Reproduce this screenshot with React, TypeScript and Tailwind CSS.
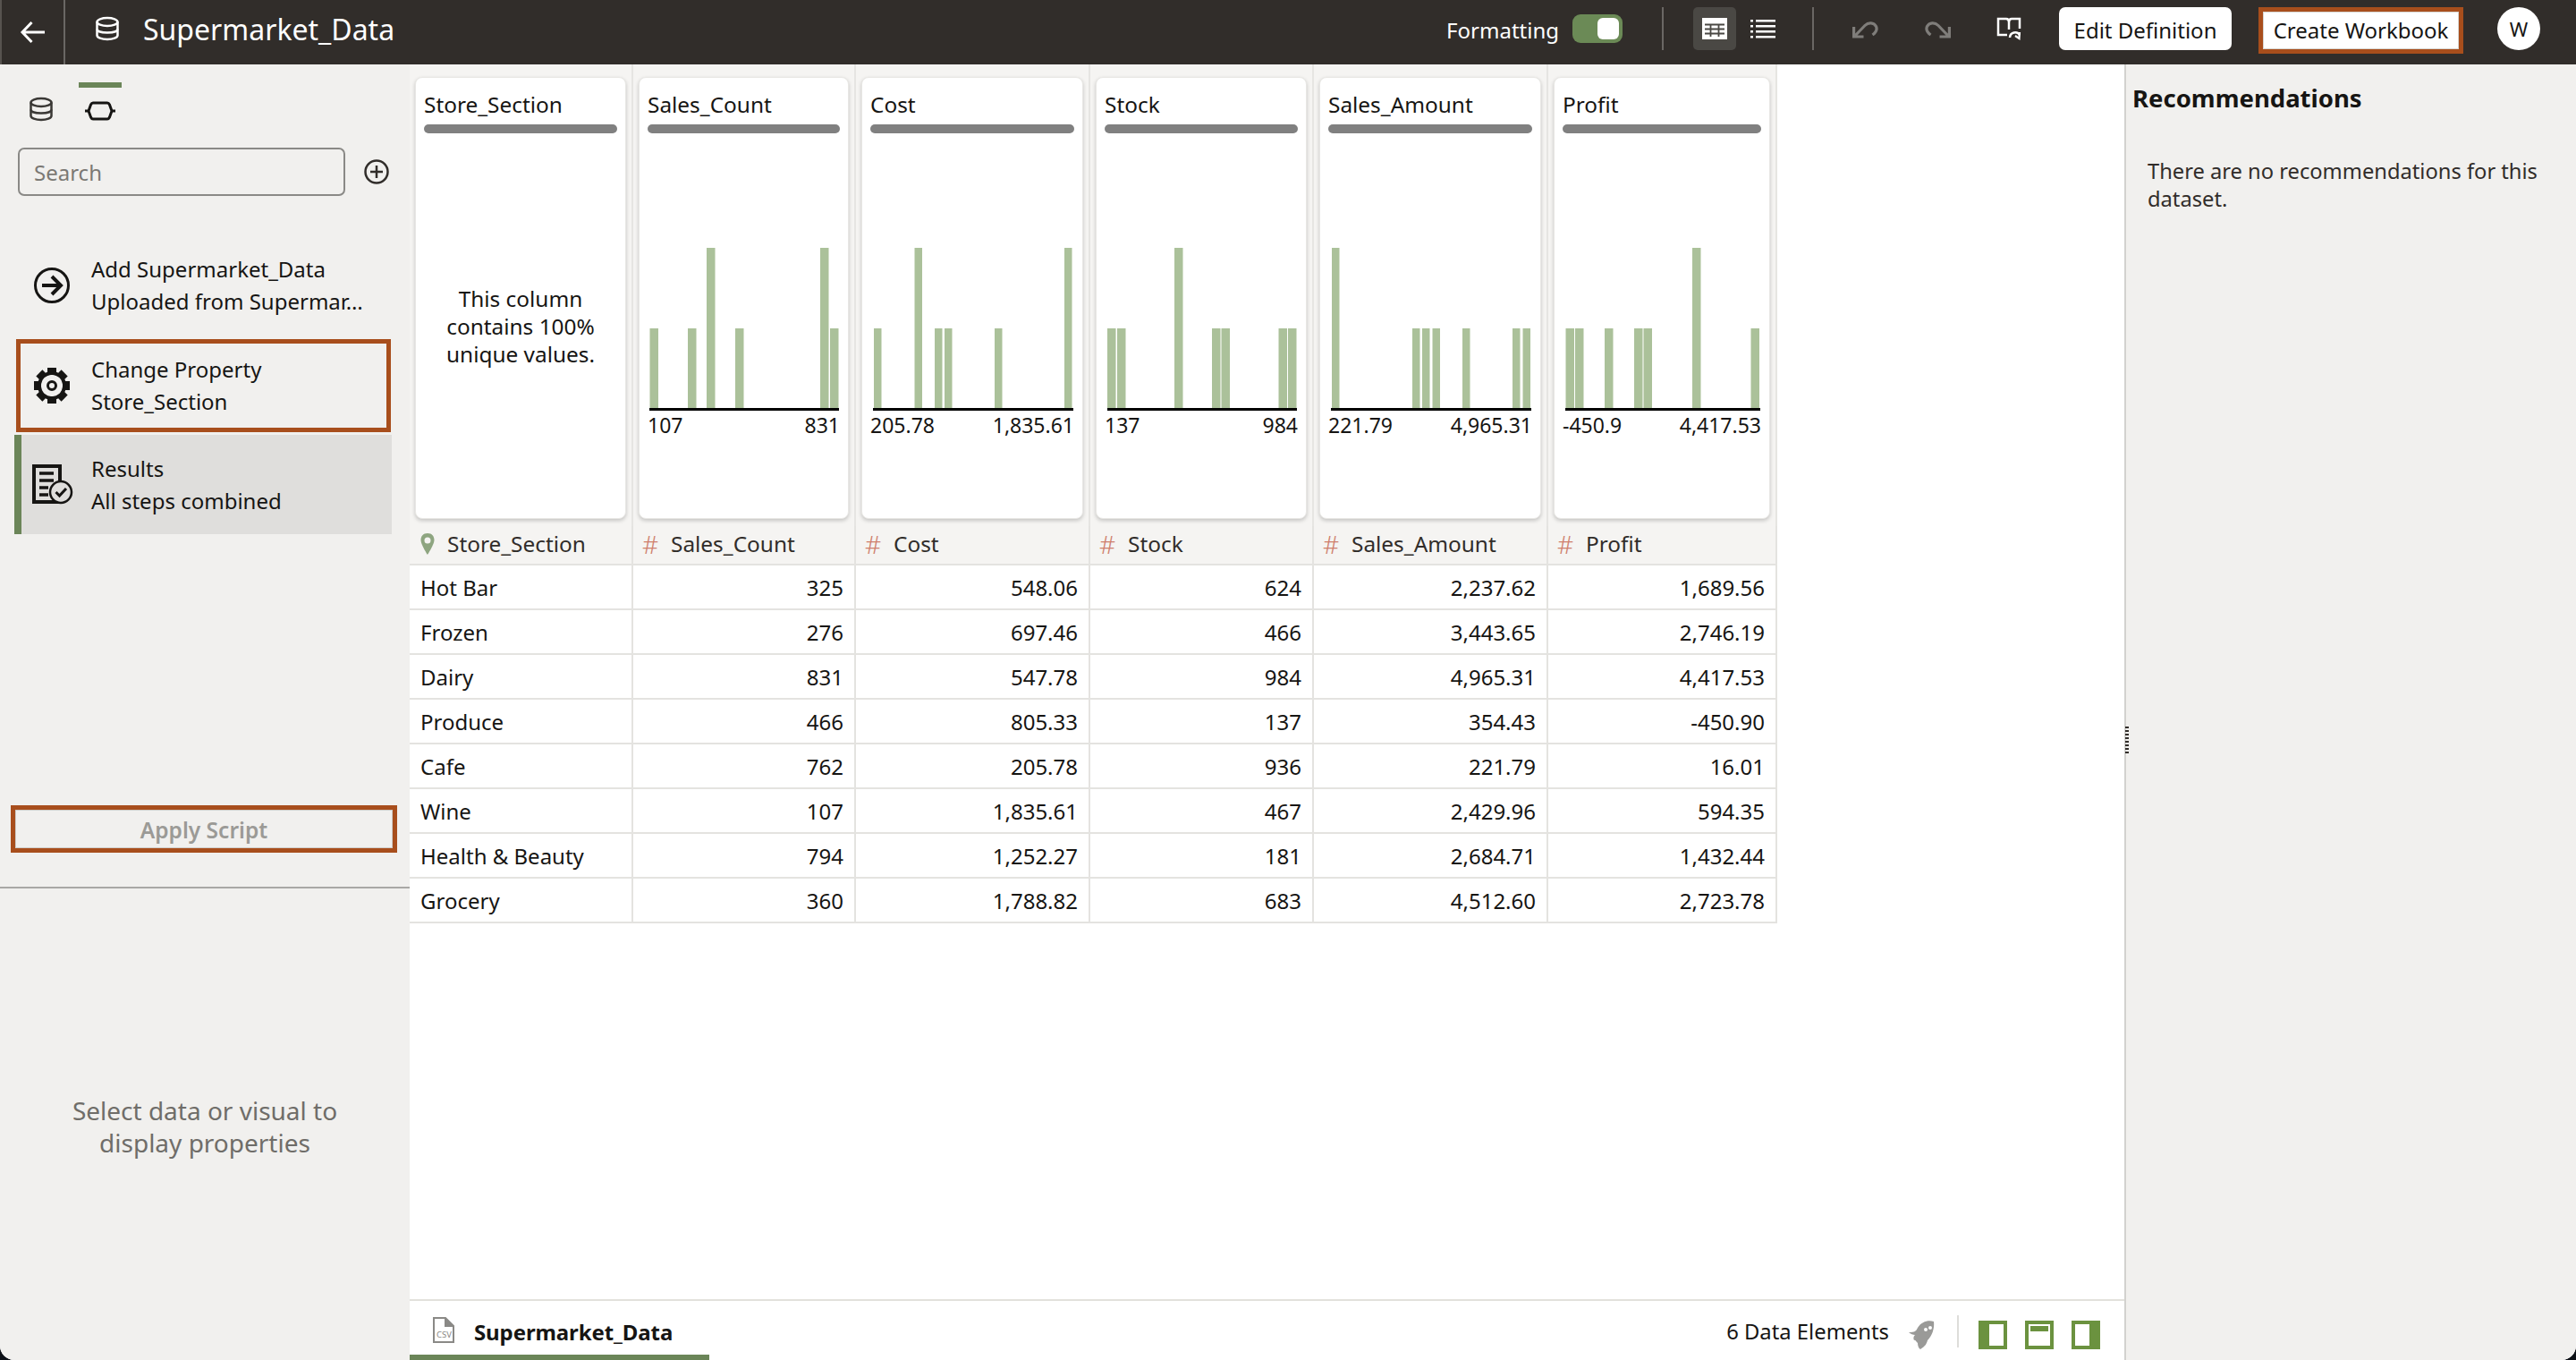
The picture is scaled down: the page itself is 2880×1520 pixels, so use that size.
import React from "react";

const FONT = { fontFamily: '"Noto Sans", "Liberation Sans", sans-serif' };

type Col = {
  name: string;
  width: number;
  left: number;
  lo?: string;
  hi?: string;
  axis?: [number, number];
  bars?: [number, number, boolean][];
  values: string[];
};

const sections = ["Hot Bar", "Frozen", "Dairy", "Produce", "Cafe", "Wine", "Health & Beauty", "Grocery"];

const cols: Col[] = [
  { name: "Store_Section", width: 250, left: 474, values: sections },
  {
    name: "Sales_Count", width: 249, left: 724, lo: "107", hi: "831", axis: [726, 938],
    bars: [[726.5, 9.5, false], [769, 9.5, false], [790, 9.5, true], [822, 9.5, false], [917, 9.5, true], [928, 9.5, false]],
    values: ["325", "276", "831", "466", "762", "107", "794", "360"],
  },
  {
    name: "Cost", width: 262, left: 973, lo: "205.78", hi: "1,835.61", axis: [976, 1200],
    bars: [[977, 8.5, false], [1022.5, 8.5, true], [1045, 8.5, false], [1056, 8.5, false], [1112, 8.5, false], [1190, 8.5, true]],
    values: ["548.06", "697.46", "547.78", "805.33", "205.78", "1,835.61", "1,252.27", "1,788.82"],
  },
  {
    name: "Stock", width: 250, left: 1235, lo: "137", hi: "984", axis: [1238, 1450],
    bars: [[1238, 9.5, false], [1249, 9.5, false], [1313, 9.5, true], [1355, 9.5, false], [1365.5, 9.5, false], [1429.5, 9.5, false], [1440, 9.5, false]],
    values: ["624", "466", "984", "137", "936", "467", "181", "683"],
  },
  {
    name: "Sales_Amount", width: 262, left: 1485, lo: "221.79", hi: "4,965.31", axis: [1488, 1712],
    bars: [[1489, 8.5, true], [1579, 8.5, false], [1590, 8.5, false], [1601.5, 8.5, false], [1635, 8.5, false], [1691, 8.5, false], [1702.5, 8.5, false]],
    values: ["2,237.62", "3,443.65", "4,965.31", "354.43", "221.79", "2,429.96", "2,684.71", "4,512.60"],
  },
  {
    name: "Profit", width: 256, left: 1747, lo: "-450.9", hi: "4,417.53", axis: [1750, 1968],
    bars: [[1750.5, 9.5, false], [1761, 9.5, false], [1794, 9.5, false], [1827, 9.5, false], [1837.5, 9.5, false], [1892, 9.5, true], [1957.5, 9.5, false]],
    values: ["1,689.56", "2,746.19", "4,417.53", "-450.90", "16.01", "594.35", "1,432.44", "2,723.78"],
  },
];

function DbIcon({ color }: { color: string }) {
  return (
    <svg width="28" height="28" viewBox="0 0 28 28" fill="none" stroke={color} strokeWidth="2.500">
      <ellipse cx="14" cy="6.500" rx="11.500" ry="4.500" />
      <path d="M2.500 6.500V21.500C2.500 24 7.500 26 14 26S25.500 24 25.500 21.500V6.500" />
      <path d="M2.500 14.500C2.500 17 7.500 18.500 14 18.500S25.500 17 25.500 14.500" />
    </svg>
  );
}

function Gear() {
  const bg = "#f1f0ee";
  return (
    <svg width="42" height="42" viewBox="0 0 42 42">
      {[0, 45, 90, 135, 180, 225, 270, 315].map((a) => (
        <rect key={a} x="16" y="1" width="10" height="9" fill="#161513" transform={`rotate(${a} 21 21)`} />
      ))}
      {[0, 45, 90, 135, 180, 225, 270, 315].map((a) => (
        <rect key={a} x="19.500" y="6" width="3" height="5" fill={bg} transform={`rotate(${a} 21 21)`} />
      ))}
      <circle cx="21" cy="21" r="14" fill="none" stroke="#161513" strokeWidth="4" />
      <circle cx="21" cy="21" r="12" fill={bg} />
      <circle cx="21" cy="21" r="4.500" fill="none" stroke="#161513" strokeWidth="3" />
    </svg>
  );
}

function ResultsIcon() {
  return (
    <svg width="46" height="46" viewBox="0 0 46 46" fill="none">
      <rect x="2" y="2" width="29" height="40" stroke="#161513" strokeWidth="4" fill="#dfdedc" />
      <path d="M8 10H24M8 18H24M8 26H18M8 34H18" stroke="#161513" strokeWidth="3.500" />
      <circle cx="32" cy="31" r="12" fill="#dfdedc" stroke="#161513" strokeWidth="2.500" />
      <path d="M26.500 31L30.500 35L38 27" stroke="#161513" strokeWidth="3" />
    </svg>
  );
}

function Chart({ col }: { col: Col }) {
  const [a, b] = col.axis!;
  return (
    <svg width={b - col.left + 4} height="182" className="mt-[128px] block">
      {col.bars!.map(([x, w, tall], i) => (
        <rect key={i} x={x - col.left} y={tall ? 0 : 90} width={w} height={tall ? 180 : 90} fill="#abc19a" />
      ))}
      <rect x={a - col.left} y="179" width={b - a} height="3" fill="#000" />
    </svg>
  );
}

function Column({ col, first }: { col: Col; first: boolean }) {
  return (
    <div className="flex flex-col shrink-0" style={{ width: col.width }}>
      <div className="h-[516px] bg-[#f5f4f2] border-r-2 border-[#e6e5e2] px-[6px] pt-[14px]">
        <div className="h-[494px] bg-white rounded-[8px] border border-[#e8e7e4] shadow-[0_2px_4px_rgba(0,0,0,0.2)] px-[9px] pt-[15px] text-[#161513]">
          <div className="h-[30px] leading-[30px] text-[24.4px] whitespace-nowrap">{col.name}</div>
          <div className="h-[10px] mt-[7px] rounded-full bg-[#808080]" />
          {col.axis ? (
            <>
              <Chart col={col} />
              <div className="flex justify-between mt-[3px] text-[23px] leading-[26px]">
                <span>{col.lo}</span>
                <span>{col.hi}</span>
              </div>
            </>
          ) : (
            <div className="mt-[169px] text-center text-[24.4px] leading-[31px]">
              This column
              <br />
              contains 100%
              <br />
              unique values.
            </div>
          )}
        </div>
      </div>
      <div className="h-[44px] flex items-center pb-[2px] bg-[#f5f4f2] border-b-2 border-r-2 border-[#e4e3e0] relative text-[#312d2a] text-[24.4px]">
        <span className="w-[42px] pl-[10px] flex items-center shrink-0">
          {first ? (
            <svg width="18" height="26" viewBox="0 0 18 26" className="ml-[1px]">
              <path
                fillRule="evenodd"
                d="M9 1C4 1 1.500 4.500 1.500 8.500C1.500 13.500 9 25 9 25S16.500 13.500 16.500 8.500C16.500 4.500 14 1 9 1ZM9 5.500A3.500 3.500 0 1 1 9 12.500A3.500 3.500 0 0 1 9 5.500Z"
                fill="#8ea580"
              />
            </svg>
          ) : (
            <span className="text-[#cf7f6d] text-[28px] font-light leading-none">#</span>
          )}
        </span>
        <span className="whitespace-nowrap">{col.name}</span>
      </div>
      {col.values.map((v, i) => (
        <div
          key={i}
          className={`h-[50px] flex items-center border-b-2 border-r-2 border-[#e4e3e0] bg-white text-[24px] pt-[2px] text-[#161513] ${
            first ? "pl-[12px]" : "justify-end pr-[12px]"
          }`}
        >
          {v}
        </div>
      ))}
    </div>
  );
}

function Step({
  icon,
  a,
  b,
  className,
}: {
  icon: React.ReactNode;
  a: string;
  b: string;
  className: string;
}) {
  return (
    <div className={`flex items-center ${className}`}>
      {icon}
      <div className="min-w-0 text-[24px] leading-[36px] text-[#161513]">
        <div className="whitespace-nowrap">{a}</div>
        <div className="whitespace-nowrap">{b}</div>
      </div>
    </div>
  );
}

export default function App() {
  return (
    <div className="w-[2880px] h-[1520px] bg-[#0d1117] overflow-hidden" style={FONT}>
      <div className="w-full h-full flex flex-col rounded-b-[16px] overflow-hidden bg-white">
        {/* top bar */}
        <div className="h-[72px] shrink-0 bg-[#312d2a] border-l-2 border-[#57534f] flex items-start text-white">
          <div className="w-[71px] h-[72px] border-r-2 border-[#6a6764] flex items-center justify-center shrink-0">
            <svg width="30" height="26" viewBox="0 0 30 26" fill="none" stroke="#fff" strokeWidth="3">
              <path d="M28 13H3M13.500 2L3 13L13.500 24" />
            </svg>
          </div>
          <div className="ml-[33px] mt-[18px]">
            <DbIcon color="#ffffff" />
          </div>
          <div className="ml-[26px] h-[66px] flex items-center text-[32px]">Supermarket_Data</div>

          <div className="ml-auto flex items-start pt-[8px] pr-[40px]">
            <div className="h-[52px] flex items-center text-[24px]">Formatting</div>
            <div className="ml-[15px] mt-[8px] w-[56px] h-[32px] rounded-[9px] bg-[#6b8a56] flex justify-end items-center pr-[4px]">
              <div className="w-[24px] h-[24px] rounded-[6px] bg-white" />
            </div>
            <div className="ml-[44px] w-[2px] h-[48px] bg-[#6a6764]" />
            <div className="ml-[33px] w-[48px] h-[48px] rounded-[5px] bg-[#4a4844] flex items-center justify-center">
              <svg width="28" height="24" viewBox="0 0 28 24">
                <rect width="28" height="24" fill="#fff" />
                <path d="M3 7.500H25M3 12.500H25M3 17.500H25M9.500 7.500V21M18.500 7.500V21" stroke="#4a4844" strokeWidth="1.800" />
              </svg>
            </div>
            <div className="ml-[16px] h-[48px] flex items-center">
              <svg width="28" height="22" viewBox="0 0 28 22" fill="#fff">
                <rect x="0" y="1" width="3" height="2.500" />
                <rect x="0" y="7" width="3" height="2.500" />
                <rect x="0" y="13" width="3" height="2.500" />
                <rect x="0" y="19" width="3" height="2.500" />
                <rect x="6" y="1" width="22" height="2.500" />
                <rect x="6" y="7" width="22" height="2.500" />
                <rect x="6" y="13" width="22" height="2.500" />
                <rect x="6" y="19" width="22" height="2.500" />
              </svg>
            </div>
            <div className="ml-[41px] w-[2px] h-[48px] bg-[#6a6764]" />
            <div className="ml-[43px] h-[48px] flex items-center">
              <svg width="29" height="22" viewBox="0 0 29 22" fill="none" stroke="#7f7d7a" strokeWidth="3.200">
                <path d="M1.600 9V20H12.500M2 20L14 7.500C18 3.500 24 4 26.500 8.500C28 12 26 15.500 22.500 18" />
              </svg>
            </div>
            <div className="ml-[52px] h-[48px] flex items-center">
              <svg width="29" height="22" viewBox="0 0 29 22" fill="none" stroke="#7f7d7a" strokeWidth="3.200">
                <path d="M27.400 9V20H16.500M27 20L15 7.500C11 3.500 5 4 2.500 8.500C1 12 3 15.500 6.500 18" />
              </svg>
            </div>
            <div className="ml-[51px] mt-[10px]">
              <svg width="30" height="30" viewBox="0 0 30 30" fill="none" stroke="#fff" strokeWidth="2.500">
                <path d="M12 21H2V3H11C13 3 14 5 14 7V15M14 7C14 5 15 3 17 3H26V14" />
                <path d="M15 24A6 6 0 0 1 26 21" />
                <path d="M26 18L25.500 25L21 22" strokeWidth="2.200" />
              </svg>
            </div>
            <div className="ml-[40px] w-[193px] h-[48px] bg-white rounded-[7px] text-[#161513] flex items-center justify-center text-[24px] pt-[3px]">
              Edit Definition
            </div>
            <div className="ml-[30px] w-[229px] h-[52px] border-[5px] border-[#a84e1c] bg-white text-[#161513] flex items-center justify-center text-[24px] outline outline-1 -outline-offset-[6px] outline-[#d8d6d2]">
              Create Workbook
            </div>
            <div className="ml-[38px] w-[48px] h-[48px] rounded-full bg-white text-[#161513] flex items-center justify-center text-[22px]">
              W
            </div>
          </div>
        </div>

        <div className="flex-1 flex min-h-0">
          {/* left panel */}
          <div className="w-[458px] shrink-0 bg-[#f1f0ee] flex flex-col">
            <div className="h-[921px] shrink-0 border-b-2 border-[#a9a8a5] flex flex-col">
              <div className="h-[93px] flex items-start pt-[20px] pl-[32px] shrink-0">
                <div className="mt-[16px]">
                  <DbIcon color="#3a3835" />
                </div>
                <div className="ml-[28px] w-[48px] h-[48px] border-t-[6px] border-[#6b8558] flex justify-center pt-[14px]">
                  <svg width="34" height="24" viewBox="0 0 34 24" fill="none" stroke="#161513" strokeWidth="3">
                    <path d="M9 3H25C26 3 27 4 27.500 5L30 12L27.500 19C27 20 26 21 25 21H9C8 21 7 20 6.500 19L4 12L6.500 5C7 4 8 3 9 3ZM0 12H4M30 12H34" />
                  </svg>
                </div>
              </div>
              <div className="flex items-center pl-[20px] shrink-0">
                <div className="w-[366px] h-[54px] rounded-[7px] border-2 border-[#8a8986] flex items-center pl-[16px] pt-[2px] text-[24px] text-[#7b7974]">
                  Search
                </div>
                <svg width="28" height="28" viewBox="0 0 28 28" fill="none" stroke="#312d2a" strokeWidth="2.500" className="ml-[21px]">
                  <circle cx="14" cy="14" r="12.500" />
                  <path d="M14 7V21M7 14H21" />
                </svg>
              </div>
              <div className="mt-[48px]">
                <Step
                  className="h-[104px]"
                  icon={
                    <div className="w-[102px] pl-[37px] shrink-0">
                      <svg width="42" height="42" viewBox="0 0 42 42" fill="none" stroke="#161513">
                        <circle cx="21" cy="21" r="18.500" strokeWidth="3" />
                        <path d="M10 21H31M21 11L31 21L21 31" strokeWidth="4" />
                      </svg>
                    </div>
                  }
                  a="Add Supermarket_Data"
                  b="Uploaded from Supermar…"
                />
                <Step
                  className="mt-[8px] ml-[18px] w-[419px] h-[104px] border-[5px] border-[#a84e1c] box-border"
                  icon={
                    <div className="w-[79px] pl-[14px] shrink-0">
                      <Gear />
                    </div>
                  }
                  a="Change Property"
                  b="Store_Section"
                />
                <Step
                  className="mt-[3px] ml-[16px] w-[422px] h-[111px] bg-[#dfdedc] border-l-[8px] border-[#6b8558]"
                  icon={
                    <div className="w-[78px] pl-[12px] shrink-0">
                      <ResultsIcon />
                    </div>
                  }
                  a="Results"
                  b="All steps combined"
                />
              </div>
              <div className="mt-auto mb-[38px] ml-[12px] w-[432px] h-[53px] border-[5px] border-[#a84e1c] outline outline-1 -outline-offset-[6px] outline-[#cfcdc9] flex items-center justify-center pt-[3px] text-[24.5px] font-semibold text-[#9b9a96] shrink-0">
                Apply Script
              </div>
            </div>
            <div className="flex-1 flex items-center justify-center pt-[4px] text-center text-[28px] leading-[36px] text-[#6f6d69]">
              <div>
                Select data or visual to
                <br />
                display properties
              </div>
            </div>
          </div>

          {/* centre */}
          <div className="flex-1 min-w-0 flex flex-col bg-white">
            <div className="flex-1 flex items-start min-h-0">
              {cols.map((c, i) => (
                <Column key={c.name} col={c} first={i === 0} />
              ))}
            </div>
            <div className="h-[68px] shrink-0 border-t-2 border-[#e2e1dc] flex items-start">
              <div className="w-[335px] h-[66px] border-b-[6px] border-[#6b8558] flex items-center pl-[25px] pt-[6px]">
                <svg width="26" height="30" viewBox="0 0 26 30" fill="none" stroke="#8a8986" strokeWidth="2">
                  <path d="M15 1H2V28H24V10L15 1Z" fill="#fff" />
                  <path d="M15 1V10H24" fill="#8a8986" />
                  <text x="5" y="23" fontSize="9.500" fill="#8a8986" stroke="none" fontFamily="Noto Sans">CSV</text>
                </svg>
                <span className="ml-[21px] mt-[3px] text-[24px] font-bold text-[#161513] tracking-[-0.1px]">Supermarket_Data</span>
              </div>
              <div className="ml-auto flex items-start pr-[27px] pt-[16px]">
                <div className="h-[38px] flex items-center text-[23.8px] text-[#161513]">6 Data Elements</div>
                <svg width="32" height="34" viewBox="0 0 32 34" className="ml-[20px] mt-[5px]">
                  <path
                    d="M30 2C24 0 16 2 12 9C10 13 9 14 2 14C4 16 7 17 9 17C7 19 7 21 8 23C10 22 10 25 12 26C12 29 13 32 15 33C20 30 22 27 23 23C28 18 31 10 30 2ZM21 9A2 2 0 1 1 21 13A2 2 0 0 1 21 9ZM26 7A2 2 0 1 1 26 11A2 2 0 0 1 26 7Z"
                    fill="#9a9a98"
                    fillRule="evenodd"
                  />
                </svg>
                <div className="ml-[24px] w-[2px] h-[36px] bg-[#dedddA]" />
                <svg width="32" height="32" viewBox="0 0 32 32" className="ml-[22px] mt-[6px]">
                  <rect width="32" height="32" fill="#6b923f" />
                  <rect x="12" y="4" width="16" height="24" fill="#fff" />
                </svg>
                <svg width="32" height="32" viewBox="0 0 32 32" className="ml-[20px] mt-[6px]">
                  <rect width="32" height="32" fill="#6b923f" />
                  <rect x="4" y="4" width="24" height="24" fill="#fff" />
                  <rect x="6" y="6" width="20" height="6" fill="#6b923f" />
                </svg>
                <svg width="32" height="32" viewBox="0 0 32 32" className="ml-[20px] mt-[6px]">
                  <rect width="32" height="32" fill="#6b923f" />
                  <rect x="4" y="4" width="16" height="24" fill="#fff" />
                </svg>
              </div>
            </div>
          </div>

          {/* right panel */}
          <div className="w-[505px] shrink-0 bg-[#f1f0ee] border-l-2 border-[#d2d1ce] relative">
            <div className="absolute -left-[1px] top-[740px] w-[6px] flex flex-col gap-[2px]">
              {Array.from({ length: 8 }).map((_, i) => (
                <div key={i} className="h-[2px] w-[4px] bg-[#312d2a]" />
              ))}
            </div>
            <div className="pl-[7px] pt-[20px] text-[27.5px] leading-[36px] font-bold text-[#161513]">Recommendations</div>
            <div className="pl-[24px] pr-[24px] mt-[48px] text-[23.7px] leading-[31px] text-[#312d2a]">
              There are no recommendations for this dataset.
            </div>
          </div>
        </div>
      </div>
    </div>
  );
}
